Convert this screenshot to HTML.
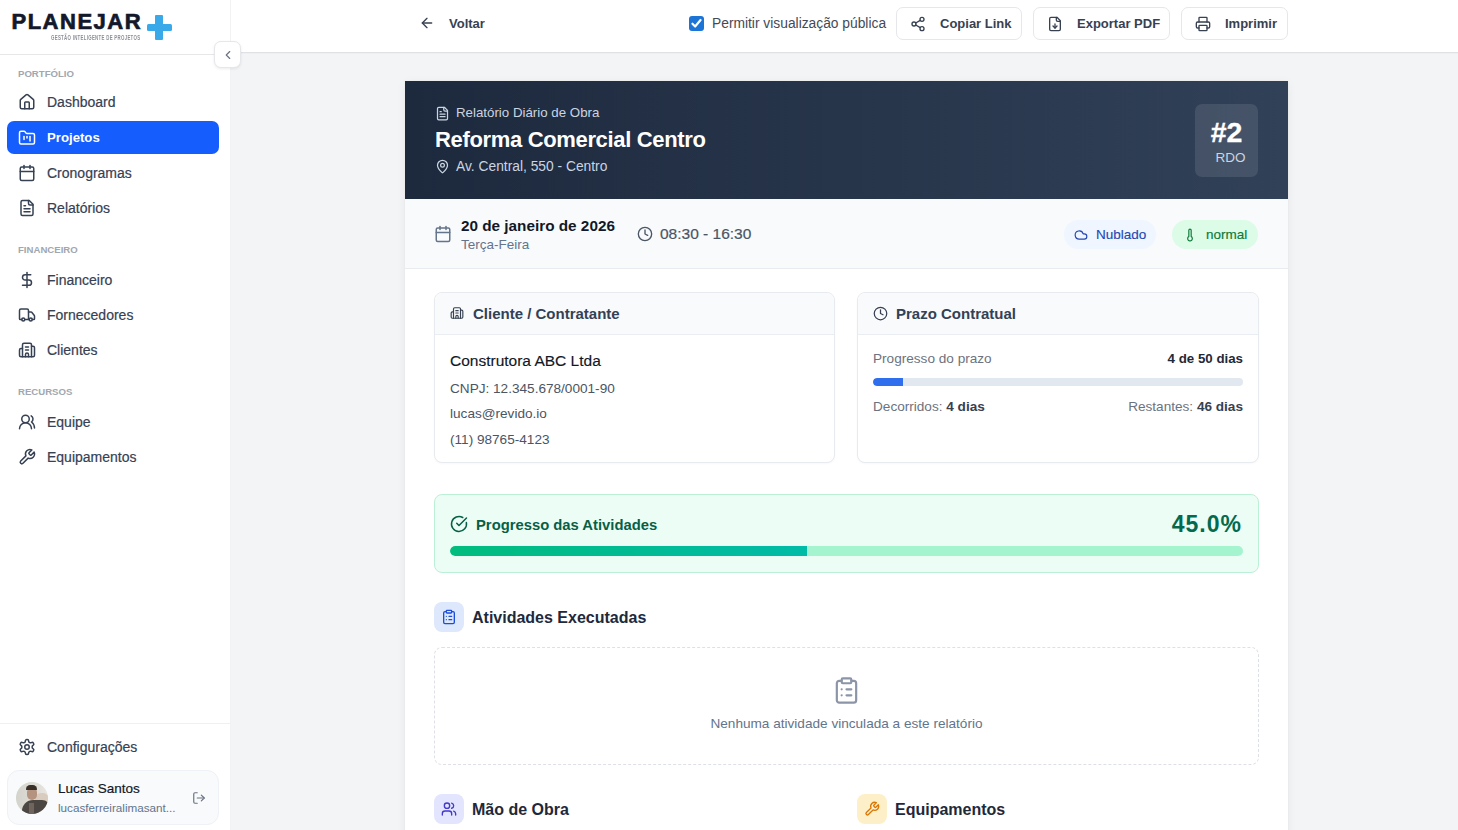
<!DOCTYPE html>
<html lang="pt-BR">
<head>
<meta charset="utf-8">
<title>RDO</title>
<style>
*{box-sizing:border-box;margin:0;padding:0}
html,body{width:1458px;height:830px;overflow:hidden}
body{font-family:"Liberation Sans",sans-serif;background:#f3f4f6;color:#111827;position:relative}
svg{display:block;overflow:visible}
.ic{fill:none;stroke:currentColor;stroke-width:2;stroke-linecap:round;stroke-linejoin:round}
.a{position:absolute;white-space:nowrap}
/* sidebar */
#sb{position:absolute;left:0;top:0;width:231px;height:830px;background:#fff;border-right:1px solid #f1f2f4}
#logo{position:absolute;left:0;top:0;width:230px;height:55px;border-bottom:1px solid #e6e7e9}
.sec{position:absolute;left:18px;font-size:9.6px;line-height:10px;font-weight:700;color:#a1a7b0;letter-spacing:0px}
.nav{position:absolute;left:7px;width:212px;height:33px;border-radius:7px;color:#364153;font-size:14px;-webkit-text-stroke:0.2px #364153}
.nav svg{position:absolute;left:11px;top:8px;width:18px;height:18px}
.nav span{position:absolute;left:40px;top:10px;line-height:14px}
.nav.act{background:#155dfc;color:#fff;font-weight:700;-webkit-text-stroke:0}
#toggle{position:absolute;z-index:10;left:214px;top:41px;width:27px;height:27px;background:#fff;border:1px solid #e5e7eb;border-radius:7px;box-shadow:0 1px 3px rgba(0,0,0,.08);color:#6b7280}
/* top bar */
#top{position:absolute;left:231px;top:0;width:1227px;height:53px;background:#fff;border-bottom:1px solid #dfe1e5;box-shadow:0 1px 1px rgba(0,0,0,0.02)}
.btn{position:absolute;top:7px;height:33px;border:1px solid #e5e7eb;border-radius:7px;background:#fff;color:#374151;font-size:13px;font-weight:700}
.btn svg{position:absolute;top:7.5px;width:16px;height:16px}
.btn span{position:absolute;top:9px;line-height:13px}
/* report */
#card{position:absolute;left:405px;top:81px;width:883px;height:760px;background:#fff;box-shadow:0 2px 10px rgba(15,23,42,0.05),0 0 2px rgba(15,23,42,0.04)}
#hdr{position:absolute;left:405px;top:81px;width:883px;height:118px;background:linear-gradient(90deg,#1d293d 0%,#314158 100%)}
#daterow{position:absolute;left:405px;top:199px;width:883px;height:70px;background:#f8fafc;border-bottom:1px solid #e8ebef}
.pill{position:absolute;top:220px;height:29px;border-radius:15px;font-size:13.5px;-webkit-text-stroke:0.15px currentColor}
.pill svg{position:absolute;top:7.5px;width:14px;height:14px}
.pill span{position:absolute;top:8px;line-height:14px}
.box{position:absolute;top:292px;height:171px;border:1px solid #e7eaee;border-radius:8px;background:#fff;overflow:hidden;box-shadow:0 1px 2px rgba(0,0,0,.03)}
.boxh{position:absolute;left:0;top:0;right:0;height:42px;background:#f8fafc;border-bottom:1px solid #eaedf1}
.boxh svg{position:absolute;top:13px;width:16px;height:16px;color:#374151}
.boxh span{position:absolute;top:12.6px;line-height:15px;font-size:15px;font-weight:700;color:#334155}
.secth{position:absolute;height:30px}
.secth .ib{position:absolute;left:0;top:0;width:30px;height:30px;border-radius:8px}
.secth .ib svg{position:absolute;left:7px;top:7px;width:16px;height:16px}
.secth span{position:absolute;left:38px;top:8px;line-height:16px;font-size:16px;font-weight:700;color:#1e293b}
</style>
</head>
<body>
<div id="sb">
  <div id="logo">
    <div class="a" style="left:11.5px;top:11px;font-size:22px;line-height:22px;font-weight:700;color:#14182b;letter-spacing:1.5px;-webkit-text-stroke:0.7px #14182b">PLANEJAR</div>
    <div class="a" style="left:51px;top:34px;font-size:6.6px;line-height:7px;font-weight:700;color:#8b8f97;letter-spacing:0.45px;transform:scaleX(0.66);transform-origin:0 0">GESTÃO INTELIGENTE DE PROJETOS</div>
    <div class="a" style="left:147px;top:23.5px;width:25px;height:7px;background:#3aa9ea;border-radius:1.5px"></div>
    <div class="a" style="left:154.5px;top:15px;width:8.5px;height:24.5px;background:#3aa9ea;border-radius:1px"></div>
  </div>
  <div id="toggle"><svg class="ic" viewBox="0 0 24 24" style="position:absolute;left:5.5px;top:5.5px;width:14px;height:14px"><path d="m15 18-6-6 6-6"/></svg></div>

  <div class="sec" style="top:69px">PORTFÓLIO</div>
  <div class="nav" style="top:85px"><svg class="ic" viewBox="0 0 24 24"><path d="M15 21v-8a1 1 0 0 0-1-1h-4a1 1 0 0 0-1 1v8"/><path d="M3 10a2 2 0 0 1 .709-1.528l7-5.999a2 2 0 0 1 2.582 0l7 5.999A2 2 0 0 1 21 10v9a2 2 0 0 1-2 2H5a2 2 0 0 1-2-2z"/></svg><span>Dashboard</span></div>
  <div class="nav act" style="top:121px"><svg class="ic" viewBox="0 0 24 24"><path d="M4 20h16a2 2 0 0 0 2-2V8a2 2 0 0 0-2-2h-7.93a2 2 0 0 1-1.66-.9l-.82-1.2A2 2 0 0 0 7.93 3H4a2 2 0 0 0-2 2v13c0 1.1.9 2 2 2Z"/><path d="M8 10v4"/><path d="M12 10v2"/><path d="M16 10v6"/></svg><span style="font-size:13.2px">Projetos</span></div>
  <div class="nav" style="top:156px"><svg class="ic" viewBox="0 0 24 24"><path d="M8 2v4"/><path d="M16 2v4"/><rect width="18" height="18" x="3" y="4" rx="2"/><path d="M3 10h18"/></svg><span>Cronogramas</span></div>
  <div class="nav" style="top:191px"><svg class="ic" viewBox="0 0 24 24"><path d="M15 2H6a2 2 0 0 0-2 2v16a2 2 0 0 0 2 2h12a2 2 0 0 0 2-2V7Z"/><path d="M14 2v4a2 2 0 0 0 2 2h4"/><path d="M10 9H8"/><path d="M16 13H8"/><path d="M16 17H8"/></svg><span>Relatórios</span></div>

  <div class="sec" style="top:245px">FINANCEIRO</div>
  <div class="nav" style="top:263px"><svg class="ic" viewBox="0 0 24 24"><line x1="12" x2="12" y1="2" y2="22"/><path d="M17 5H9.5a3.5 3.5 0 0 0 0 7h5a3.5 3.5 0 0 1 0 7H6"/></svg><span>Financeiro</span></div>
  <div class="nav" style="top:298px"><svg class="ic" viewBox="0 0 24 24"><path d="M14 18V6a2 2 0 0 0-2-2H4a2 2 0 0 0-2 2v11a1 1 0 0 0 1 1h2"/><path d="M15 18H9"/><path d="M19 18h2a1 1 0 0 0 1-1v-3.65a1 1 0 0 0-.22-.624l-3.48-4.35A1 1 0 0 0 17.52 8H14"/><circle cx="17" cy="18" r="2"/><circle cx="7" cy="18" r="2"/></svg><span>Fornecedores</span></div>
  <div class="nav" style="top:333px"><svg class="ic" viewBox="0 0 24 24"><path d="M10 12h4"/><path d="M10 8h4"/><path d="M14 21v-3a2 2 0 0 0-4 0v3"/><path d="M6 10H4a2 2 0 0 0-2 2v7a2 2 0 0 0 2 2h16a2 2 0 0 0 2-2V9a2 2 0 0 0-2-2h-2"/><path d="M6 21V5a2 2 0 0 1 2-2h8a2 2 0 0 1 2 2v16"/></svg><span>Clientes</span></div>

  <div class="sec" style="top:387px">RECURSOS</div>
  <div class="nav" style="top:405px"><svg class="ic" viewBox="0 0 24 24"><path d="M18 21a8 8 0 0 0-16 0"/><circle cx="10" cy="8" r="5"/><path d="M22 20c0-3.37-2-6.5-4-8a5 5 0 0 0-.45-8.3"/></svg><span>Equipe</span></div>
  <div class="nav" style="top:440px"><svg class="ic" viewBox="0 0 24 24"><path d="M14.7 6.3a1 1 0 0 0 0 1.4l1.6 1.6a1 1 0 0 0 1.4 0l3.77-3.77a6 6 0 0 1-7.940 7.940l-6.91 6.91a2.12 2.12 0 0 1-3-3l6.91-6.91a6 6 0 0 1 7.940-7.940l-3.760 3.760z"/></svg><span>Equipamentos</span></div>

  <div class="a" style="left:0;top:723px;width:230px;height:1px;background:#eef0f3"></div>
  <div class="nav" style="top:730px"><svg class="ic" viewBox="0 0 24 24"><path d="M12.22 2h-.44a2 2 0 0 0-2 2v.18a2 2 0 0 1-1 1.73l-.43.25a2 2 0 0 1-2 0l-.15-.08a2 2 0 0 0-2.730.73l-.22.38a2 2 0 0 0 .73 2.730l.15.1a2 2 0 0 1 1 1.720v.51a2 2 0 0 1-1 1.740l-.15.09a2 2 0 0 0-.73 2.730l.22.38a2 2 0 0 0 2.730.73l.15-.08a2 2 0 0 1 2 0l.43.25a2 2 0 0 1 1 1.730V20a2 2 0 0 0 2 2h.44a2 2 0 0 0 2-2v-.18a2 2 0 0 1 1-1.730l.43-.25a2 2 0 0 1 2 0l.15.08a2 2 0 0 0 2.730-.73l.22-.39a2 2 0 0 0-.73-2.730l-.15-.08a2 2 0 0 1-1-1.740v-.5a2 2 0 0 1 1-1.740l.15-.09a2 2 0 0 0 .73-2.730l-.22-.38a2 2 0 0 0-2.730-.73l-.15.08a2 2 0 0 1-2 0l-.43-.25a2 2 0 0 1-1-1.730V4a2 2 0 0 0-2-2z"/><circle cx="12" cy="12" r="3"/></svg><span>Configurações</span></div>

  <div class="a" style="left:7px;top:770px;width:212px;height:55px;border-radius:12px;background:#f8fafc;border:1px solid #eef1f5">
    <div class="a" style="left:8px;top:11px;width:32px;height:32px;border-radius:16px;overflow:hidden;background:linear-gradient(90deg,#d3d2cb,#e9e5e0)">
      <div class="a" style="left:19px;top:11px;width:14px;height:12px;border-radius:7px;background:#d9cbbd"></div>
      <div class="a" style="left:6px;top:18px;width:28px;height:18px;border-radius:11px 8px 0 0;background:#4b4641"></div>
      <div class="a" style="left:13px;top:21px;width:5px;height:14px;background:#6f655d;filter:blur(0.6px)"></div>
      <div class="a" style="left:10.5px;top:6px;width:10px;height:12px;border-radius:5px 5px 6px 6px;background:#b4947e;filter:blur(0.4px)"></div>
      <div class="a" style="left:10px;top:3px;width:11px;height:5px;border-radius:5px 5px 1px 1px;background:#3a2e29"></div>
    </div>
    <div class="a" style="left:50px;top:11px;font-size:13.5px;line-height:14px;color:#111827;-webkit-text-stroke:0.2px #111827">Lucas Santos</div>
    <div class="a" style="left:50px;top:31px;font-size:11.7px;line-height:12px;color:#64748b">lucasferreiralimasant...</div>
    <svg class="ic" viewBox="0 0 24 24" style="position:absolute;left:183.5px;top:19.5px;width:14px;height:14px;color:#6b7280"><path d="M9 21H5a2 2 0 0 1-2-2V5a2 2 0 0 1 2-2h4"/><polyline points="16 17 21 12 16 7"/><line x1="21" x2="9" y1="12" y2="12"/></svg>
  </div>
</div>

<div id="top">
  <svg class="ic a" viewBox="0 0 24 24" style="left:188px;top:15px;width:16px;height:16px;color:#374151"><path d="m12 19-7-7 7-7"/><path d="M19 12H5"/></svg>
  <div class="a" style="left:218px;top:17px;font-size:13px;line-height:13px;font-weight:700;color:#374151">Voltar</div>
  <div class="a" style="left:458px;top:16px;width:15px;height:15px;border-radius:3px;background:#1b74d6"><svg viewBox="0 0 24 24" style="position:absolute;left:1px;top:1px;width:13px;height:13px;fill:none;stroke:#fff;stroke-width:4;stroke-linecap:round;stroke-linejoin:round"><path d="M4.5 12.5l5 5L19.5 5.5"/></svg></div>
  <div class="a" style="left:481px;top:17px;font-size:13.8px;line-height:14px;color:#434a56">Permitir visualização pública</div>
  <div class="btn" style="left:665px;width:126px"><svg class="ic" viewBox="0 0 24 24" style="left:13px"><circle cx="18" cy="5" r="3"/><circle cx="6" cy="12" r="3"/><circle cx="18" cy="19" r="3"/><line x1="8.59" x2="15.42" y1="13.51" y2="17.49"/><line x1="15.41" x2="8.59" y1="6.51" y2="10.49"/></svg><span style="left:43px">Copiar Link</span></div>
  <div class="btn" style="left:802px;width:137px"><svg class="ic" viewBox="0 0 24 24" style="left:13px"><path d="M15 2H6a2 2 0 0 0-2 2v16a2 2 0 0 0 2 2h12a2 2 0 0 0 2-2V7Z"/><path d="M14 2v4a2 2 0 0 0 2 2h4"/><path d="M12 18v-6"/><path d="m9 15 3 3 3-3"/></svg><span style="left:43px">Exportar PDF</span></div>
  <div class="btn" style="left:950px;width:107px"><svg class="ic" viewBox="0 0 24 24" style="left:13px"><path d="M6 18H4a2 2 0 0 1-2-2v-5a2 2 0 0 1 2-2h16a2 2 0 0 1 2 2v5a2 2 0 0 1-2 2h-2"/><path d="M6 9V3a1 1 0 0 1 1-1h10a1 1 0 0 1 1 1v6"/><rect x="6" y="14" width="12" height="8" rx="1"/></svg><span style="left:43px">Imprimir</span></div>
</div>

<div id="card"></div>
<div id="hdr">
  <svg class="ic a" viewBox="0 0 24 24" style="left:29.5px;top:24.5px;width:15px;height:15px;color:#cbd5e1"><path d="M15 2H6a2 2 0 0 0-2 2v16a2 2 0 0 0 2 2h12a2 2 0 0 0 2-2V7Z"/><path d="M14 2v4a2 2 0 0 0 2 2h4"/><path d="M10 9H8"/><path d="M16 13H8"/><path d="M16 17H8"/></svg>
  <div class="a" style="left:51px;top:25px;font-size:13.3px;line-height:14px;color:#cbd5e1">Relatório Diário de Obra</div>
  <div class="a" style="left:30px;top:48px;font-size:22px;line-height:22px;font-weight:700;color:#fff;letter-spacing:-0.34px">Reforma Comercial Centro</div>
  <svg class="ic a" viewBox="0 0 24 24" style="left:29.5px;top:78px;width:15px;height:15px;color:#cbd5e1"><path d="M20 10c0 4.993-5.539 10.193-7.399 11.799a1 1 0 0 1-1.202 0C9.539 20.193 4 14.993 4 10a8 8 0 0 1 16 0"/><circle cx="12" cy="10" r="3"/></svg>
  <div class="a" style="left:51px;top:79px;font-size:13.8px;line-height:14px;color:#cbd5e1">Av. Central, 550 - Centro</div>
  <div class="a" style="left:790px;top:23px;width:63px;height:73px;border-radius:7px;background:rgba(255,255,255,0.1)">
    <div class="a" style="left:0;width:63px;top:14px;text-align:center;font-size:28.5px;line-height:28px;font-weight:700;color:#fff;-webkit-text-stroke:0.3px #fff">#2</div>
    <div class="a" style="left:4px;width:63px;top:47px;text-align:center;font-size:13.5px;line-height:14px;color:#cbd5e1">RDO</div>
  </div>
</div>

<div id="daterow">
  <svg class="ic a" viewBox="0 0 24 24" style="left:29px;top:25.5px;width:18px;height:18px;color:#64748b"><path d="M8 2v4"/><path d="M16 2v4"/><rect width="18" height="18" x="3" y="4" rx="2"/><path d="M3 10h18"/></svg>
  <div class="a" style="left:56px;top:19px;font-size:15.3px;line-height:15px;font-weight:700;color:#111827">20 de janeiro de 2026</div>
  <div class="a" style="left:56px;top:39px;font-size:13.5px;line-height:14px;color:#64748b">Terça-Feira</div>
  <svg class="ic a" viewBox="0 0 24 24" style="left:232px;top:27px;width:16px;height:16px;color:#4b5563"><circle cx="12" cy="12" r="10"/><polyline points="12 6 12 12 16 14"/></svg>
  <div class="a" style="left:255px;top:27px;font-size:15.5px;line-height:16px;color:#4b5563;-webkit-text-stroke:0.2px #4b5563">08:30 - 16:30</div>
</div>
<div class="pill" style="left:1064px;width:92px;background:#eff6ff;color:#2546b4"><svg class="ic" viewBox="0 0 24 24" style="left:10px"><path d="M17.5 19H9a7 7 0 1 1 6.71-9h1.790a4.5 4.5 0 1 1 0 9Z"/></svg><span style="left:32px">Nublado</span></div>
<div class="pill" style="left:1172px;width:86px;background:#dcfce7;color:#0a7a38"><svg class="ic" viewBox="0 0 24 24" style="left:11px"><path d="M14 4v10.54a4 4 0 1 1-4 0V4a2 2 0 0 1 4 0Z"/></svg><span style="left:34px">normal</span></div>

<div class="box" style="left:434px;width:401px">
  <div class="boxh"><svg class="ic" viewBox="0 0 24 24" style="left:15px;top:13.4px;width:14px;height:14px"><path d="M10 12h4"/><path d="M10 8h4"/><path d="M14 21v-3a2 2 0 0 0-4 0v3"/><path d="M6 10H4a2 2 0 0 0-2 2v7a2 2 0 0 0 2 2h16a2 2 0 0 0 2-2V9a2 2 0 0 0-2-2h-2"/><path d="M6 21V5a2 2 0 0 1 2-2h8a2 2 0 0 1 2 2v16"/></svg><span style="left:38px">Cliente / Contratante</span></div>
  <div class="a" style="left:15px;top:59.5px;font-size:15.5px;line-height:16px;color:#111827;-webkit-text-stroke:0.15px #111827">Construtora ABC Ltda</div>
  <div class="a" style="left:15px;top:89px;font-size:13.6px;line-height:14px;color:#4b5563">CNPJ: 12.345.678/0001-90</div>
  <div class="a" style="left:15px;top:114px;font-size:13.6px;line-height:14px;color:#4b5563">lucas@revido.io</div>
  <div class="a" style="left:15px;top:140px;font-size:13.6px;line-height:14px;color:#4b5563">(11) 98765-4123</div>
</div>
<div class="box" style="left:857px;width:402px">
  <div class="boxh"><svg class="ic" viewBox="0 0 24 24" style="left:15px;top:12.6px;width:15px;height:15px"><circle cx="12" cy="12" r="10"/><polyline points="12 6 12 12 16 14"/></svg><span style="left:38px">Prazo Contratual</span></div>
  <div class="a" style="left:15px;top:59px;font-size:13.6px;line-height:14px;color:#6b7280">Progresso do prazo</div>
  <div class="a" style="right:15px;top:59px;font-size:13.3px;line-height:14px;font-weight:700;color:#1f2937">4 de 50 dias</div>
  <div class="a" style="left:15px;top:85px;width:370px;height:8px;border-radius:4px;background:#e2e8f0;overflow:hidden"><div style="width:30px;height:8px;background:#2f6fed;border-radius:4px 0 0 4px"></div></div>
  <div class="a" style="left:15px;top:107px;font-size:13.6px;line-height:14px;color:#6b7280">Decorridos: <b style="color:#374151">4 dias</b></div>
  <div class="a" style="right:15px;top:107px;font-size:13.6px;line-height:14px;color:#6b7280">Restantes: <b style="color:#374151">46 dias</b></div>
</div>

<div class="a" style="left:434px;top:494px;width:825px;height:79px;border:1px solid #bbf0d6;border-radius:8px;background:#ecfdf5">
  <svg class="ic a" viewBox="0 0 24 24" style="left:14.5px;top:19.5px;width:18px;height:18px;color:#065f46"><path d="M21.801 10A10 10 0 1 1 17 3.335"/><path d="m9 11 3 3L22 4"/></svg>
  <div class="a" style="left:41px;top:23px;font-size:14.8px;line-height:15px;font-weight:700;color:#065f46">Progresso das Atividades</div>
  <div class="a" style="right:16px;top:17.5px;font-size:23px;line-height:23px;font-weight:700;color:#046a4d;letter-spacing:1px">45.0%</div>
  <div class="a" style="left:15px;top:51px;width:793px;height:10px;border-radius:5px;background:#a4f4cf;overflow:hidden"><div style="width:357px;height:10px;background:linear-gradient(90deg,#00bc7d,#00bba7);border-radius:5px 0 0 5px"></div></div>
</div>

<div class="secth" style="left:434px;top:602px;width:300px">
  <div class="ib" style="background:#dde8fc;color:#1d4ed8"><svg class="ic" viewBox="0 0 24 24"><rect width="8" height="4" x="8" y="2" rx="1" ry="1"/><path d="M16 4h2a2 2 0 0 1 2 2v14a2 2 0 0 1-2 2H6a2 2 0 0 1-2-2V6a2 2 0 0 1 2-2h2"/><path d="M12 11h4"/><path d="M12 16h4"/><path d="M8 11h.01"/><path d="M8 16h.01"/></svg></div>
  <span>Atividades Executadas</span>
</div>
<div class="a" style="left:434px;top:647px;width:825px;height:118px;border:1px dashed #dde1e7;border-radius:8px;background:#fff">
  <svg class="ic a" viewBox="0 0 24 24" style="left:396.5px;top:28.3px;width:29px;height:29px;color:#8b95a7;stroke-width:1.8"><rect width="8" height="4" x="8" y="2" rx="1" ry="1"/><path d="M16 4h2a2 2 0 0 1 2 2v14a2 2 0 0 1-2 2H6a2 2 0 0 1-2-2V6a2 2 0 0 1 2-2h2"/><path d="M12 11h4"/><path d="M12 16h4"/><path d="M8 11h.01"/><path d="M8 16h.01"/></svg>
  <div class="a" style="left:0;width:823px;top:69px;text-align:center;font-size:13.6px;line-height:14px;color:#64748b">Nenhuma atividade vinculada a este relatório</div>
</div>

<div class="secth" style="left:434px;top:794px;width:300px">
  <div class="ib" style="background:#e2e5fd;color:#4338ca"><svg class="ic" viewBox="0 0 24 24"><path d="M16 21v-2a4 4 0 0 0-4-4H6a4 4 0 0 0-4 4v2"/><circle cx="9" cy="7" r="4"/><path d="M22 21v-2a4 4 0 0 0-3-3.870"/><path d="M16 3.13a4 4 0 0 1 0 7.750"/></svg></div>
  <span>Mão de Obra</span>
</div>
<div class="secth" style="left:857px;top:794px;width:300px">
  <div class="ib" style="background:#fdf0c8;color:#d97706"><svg class="ic" viewBox="0 0 24 24"><path d="M14.7 6.3a1 1 0 0 0 0 1.4l1.6 1.6a1 1 0 0 0 1.4 0l3.77-3.77a6 6 0 0 1-7.940 7.940l-6.91 6.91a2.12 2.12 0 0 1-3-3l6.91-6.91a6 6 0 0 1 7.940-7.940l-3.760 3.760z"/></svg></div>
  <span>Equipamentos</span>
</div>
</body>
</html>
